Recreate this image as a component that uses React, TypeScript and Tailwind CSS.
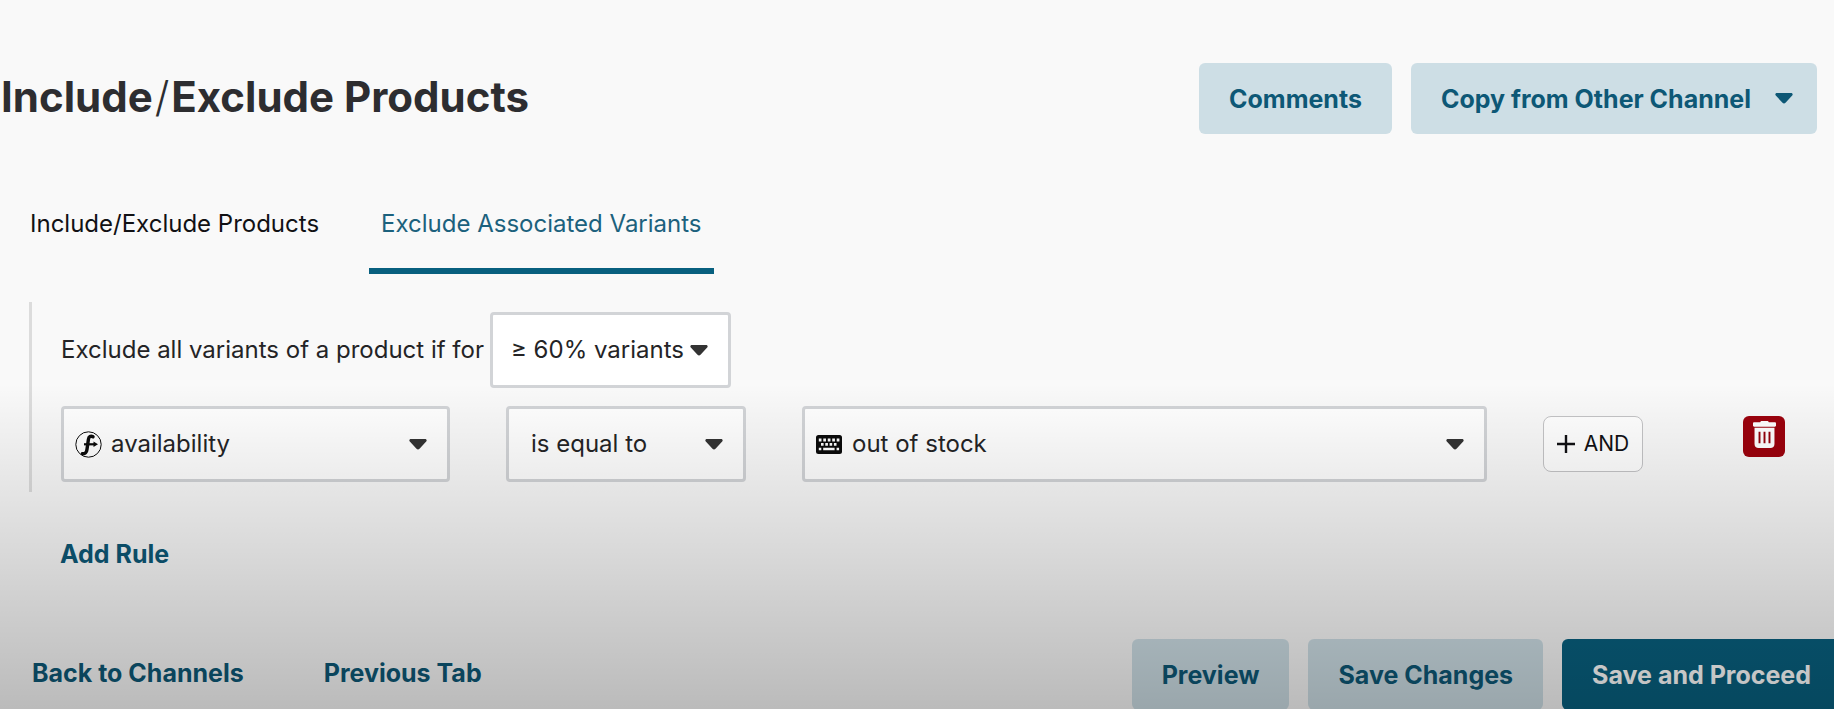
import { useState, type ReactNode } from "react";
import clsx from "clsx";

const TABS = ["Include/Exclude Products", "Exclude Associated Variants"];

function Caret({ className }: { className?: string }) {
  return (
    <svg viewBox="0 0 18 11" className={clsx("h-[11px] w-[18px] shrink-0", className)} fill="currentColor" aria-hidden="true">
      <path d="M2 0h14c1.500 0 2.200 1.400 1.200 2.500l-6.700 7.300c-.8 1-2.200 1-3 0L.8 2.500C-.2 1.400.5 0 2 0z" />
    </svg>
  );
}

function FunctionIcon() {
  return (
    <svg viewBox="0 0 27 27" className="h-[27px] w-[27px]" fill="none" stroke="#0a0a0a" aria-hidden="true">
      <circle cx="13.500" cy="13.500" r="12.700" strokeWidth="1" />
      <path d="M18 5.800c-2.300-1.400-4.200-.2-4.600 2.600l-1.400 9.800c-.4 3.400-2 5-4.600 4.500" strokeWidth="3.400" strokeLinecap="round" />
      <path d="M9 13.300h11" strokeWidth="2.200" />
      <path d="M18.500 10.500l4.500 2.800-4.500 2.800z" fill="#0a0a0a" stroke="none" />
    </svg>
  );
}

function KeyboardIcon() {
  return (
    <svg viewBox="0 0 26 19" className="h-[19px] w-[26px]" aria-hidden="true">
      <rect width="26" height="19" rx="2.500" fill="#0a0a0a" />
      <path d="M2.800 5h20.600" stroke="#fff" strokeWidth="2.800" strokeDasharray="2.700 1.780" />
      <path d="M5 9.400h16.500" stroke="#fff" strokeWidth="2.600" strokeDasharray="2.600 1.700" />
      <path d="M2.800 14h2.500M7.200 14h11.400M20.600 14h2.500" stroke="#fff" strokeWidth="2.400" />
    </svg>
  );
}

function TrashIcon() {
  return (
    <svg viewBox="0 0 24 28" className="h-[27px] w-[23px]" aria-hidden="true">
      <path d="M7.500 1.300C7.800.5 8.400 0 9.300 0h5.400c.9 0 1.500.5 1.800 1.300h6.200c.8 0 1.300.5 1.300 1.300v2c0 .8-.5 1.200-1.200 1.200H1.200C.5 5.800 0 5.400 0 4.600v-2c0-.8.5-1.300 1.300-1.300z" fill="#fff" />
      <path d="M1.600 7h20.800v16.800c0 2.600-1.700 4.200-4.200 4.200H5.800c-2.500 0-4.200-1.600-4.200-4.200z" fill="#fff" />
      <path d="M6.800 11v12M12 11v12M17.200 11v12" stroke="#93020c" strokeWidth="2" />
    </svg>
  );
}

type SelectBoxProps = {
  label: string;
  options: string[];
  className?: string;
  padding: string;
  icon?: ReactNode;
  id?: string;
};

function SelectBox({ label, options, className, padding, icon, id }: SelectBoxProps) {
  return (
    <div className={clsx("relative h-[76px]", className)}>
      {icon && <span className="pointer-events-none absolute inset-y-0 left-[14px] flex items-center">{icon}</span>}
      <select id={id} aria-label={label} className={clsx("h-full w-full appearance-none rounded border-3 border-[#d2d4d7] bg-white text-2xl text-[#242426]", padding)}>
        {options.map((o) => <option key={o}>{o}</option>)}
      </select>
      <Caret className="pointer-events-none absolute inset-y-0 right-[23px] my-auto text-[#333]" />
    </div>
  );
}

function ActionButton({ children, primary }: { children: ReactNode; primary?: boolean }) {
  return (
    <button className={clsx("flex h-[71px] items-center justify-center gap-6 whitespace-nowrap rounded-md px-[30px] text-[25px] font-bold", primary ? "bg-[#08607f] text-white" : "bg-[#cddee5] text-[#0d5876]")}>
      {children}
    </button>
  );
}

export default function App() {
  const [tab, setTab] = useState(TABS[1]);

  return (
    <div className="relative h-screen overflow-hidden bg-[#f9f9f9] pt-[63px] font-['Inter',sans-serif] leading-8 text-[#242426]">
      <header className="flex h-[71px] items-center justify-between pl-[1px] pr-[17px]">
        <h1 className="pb-1 text-[42px] font-bold text-[#2d2d30]">
          Include<span className="px-[2px] font-light">/</span>Exclude Products
        </h1>
        <div className="flex gap-[19px]">
          <ActionButton>Comments</ActionButton>
          <ActionButton>
            <span>Copy from Other Channel</span>
            <Caret className="-mr-1.5" />
          </ActionButton>
        </div>
      </header>

      <nav className="mt-[74px] flex gap-[38px] pl-[18px]">
        {TABS.map((name) => (
          <button
            key={name}
            onClick={() => setTab(name)}
            className={clsx("border-b-6 px-3 pb-7 text-2xl leading-8", tab === name ? "border-[#08607f] text-[#1c617d]" : "border-transparent text-[#111114]")}
          >
            {name}
          </button>
        ))}
      </nav>

      <section className="ml-[29px] mt-7 flex flex-col gap-[18px] border-l-3 border-[#dcdcdc] py-[10px] pl-[29px] pr-[49px]">
        <div className="flex items-center gap-[6px]">
          <label htmlFor="threshold" className="text-2xl">Exclude all variants of a product if for</label>
          <SelectBox id="threshold" label="Variant threshold" options={["≥ 60% variants", "≥ 80% variants", "all variants"]} className="w-[241px]" padding="pl-[18px]" />
        </div>
        <div className="flex items-center gap-14">
          <SelectBox label="Attribute" options={["availability", "price", "brand"]} className="w-[389px]" padding="pl-[47px]" icon={<FunctionIcon />} />
          <SelectBox label="Operator" options={["is equal to", "is not equal to"]} className="w-[240px]" padding="pl-[22px]" />
          <SelectBox label="Value" options={["out of stock", "in stock"]} className="flex-1" padding="pl-[47px]" icon={<KeyboardIcon />} />
          <div className="flex items-start gap-[100px]">
            <button className="flex h-14 w-[100px] items-center justify-center gap-[9px] rounded-lg border border-[#c4c4c6] bg-white text-[21px] text-[#111114]">
              <svg viewBox="0 0 18 18" className="h-[18px] w-[18px]" stroke="currentColor" strokeWidth="2.400" aria-hidden="true">
                <path d="M9 0v18M0 9h18" />
              </svg>
              AND
            </button>
            <button aria-label="Delete rule" className="flex h-[41px] w-[42px] items-center justify-center rounded-md bg-[#9c020d] pb-1">
              <TrashIcon />
            </button>
          </div>
        </div>
      </section>

      <button className="ml-[60px] mt-[46px] block text-[25px] leading-8 font-bold text-[#0d5876]">Add Rule</button>

      <footer className="-mr-[7px] mt-[69px] flex items-center justify-between pl-8">
        <div className="flex gap-20 pb-1 text-[25px] font-bold text-[#0d5876]">
          <a href="#channels">Back to Channels</a>
          <a href="#previous">Previous Tab</a>
        </div>
        <div className="flex gap-[19px]">
          <ActionButton>Preview</ActionButton>
          <ActionButton>Save Changes</ActionButton>
          <ActionButton primary>Save and Proceed</ActionButton>
        </div>
      </footer>

      {/* shade that darkens towards the bottom edge */}
      <div className="pointer-events-none absolute inset-x-0 bottom-0 h-[46%] bg-linear-to-b from-black/0 via-black/10 via-40% to-black/25" />
    </div>
  );
}
